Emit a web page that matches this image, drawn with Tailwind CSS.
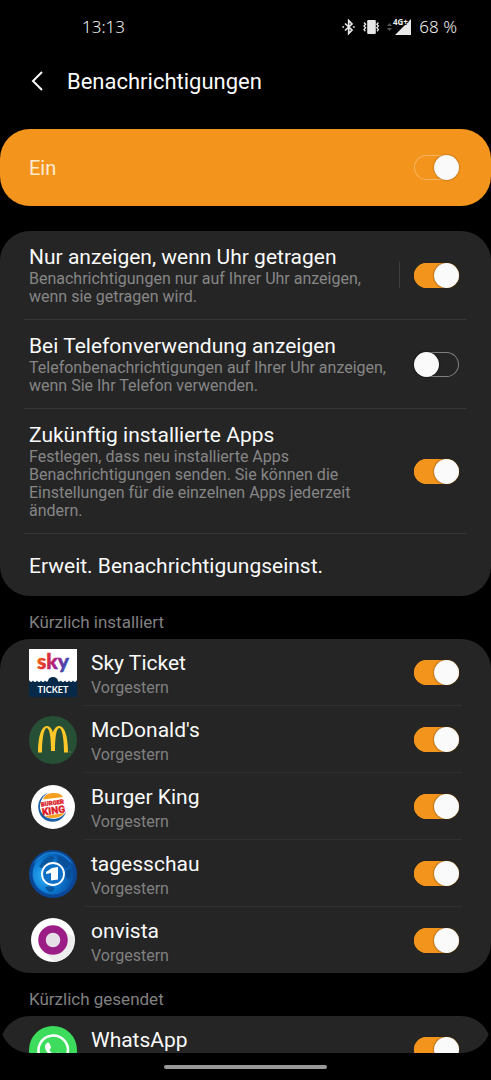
<!DOCTYPE html>
<html lang="de">
<head>
  <meta charset="UTF-8" />
  <meta name="viewport" content="width=device-width, initial-scale=1.0"/>
  <title>Benachrichtigungen</title>
  <script src="https://cdn.jsdelivr.net/npm/@tailwindcss/browser@4"></script>
</head>
<body class="flex h-screen flex-col overflow-hidden bg-black font-[Roboto,sans-serif] text-[#fafafa]">

  <!-- Statusleiste -->
  <div class="flex h-[54px] shrink-0 items-center justify-between pr-[34px] pl-[82px] font-['Noto_Sans',sans-serif] text-[17px] font-light text-[#f0f0f0]">
    <span>13:13</span>
    <div class="flex items-center">
      <svg class="mr-2 h-4 w-[13px]" viewBox="0 0 13 16" fill="none" stroke="#e8e8e8" stroke-width="1.7">
        <path d="M3 4.5 10 11 6.7 14.5V1.5L10 5 3 11.5"/>
        <path d="M.3 8h1.8M10.9 8h1.8"/>
      </svg>
      <svg class="mr-[7px] h-4 w-[17px]" viewBox="0 0 17 16">
        <rect x="4.2" y="1" width="8.6" height="14" rx="1" fill="#e8e8e8"/>
        <path d="M1 3.5 2.6 5.2 1 7l1.6 1.8L1 10.6l1.4 1.6M15.4 3.5l-1.6 1.7L15.4 7l-1.6 1.8 1.6 1.8-1.4 1.6" fill="none" stroke="#e8e8e8" stroke-width="1.3"/>
      </svg>
      <svg class="mr-[2px] h-4 w-[5px]" viewBox="0 0 5 16" fill="#555">
        <path d="M0 7 2.5 4 5 7zM0 9h5L2.5 12z"/>
      </svg>
      <svg class="mr-2 h-[18px] w-[17px] overflow-visible" viewBox="0 0 17 18">
        <path d="M17 1v16H1z" fill="#e8e8e8"/>
        <text x="-1" y="7" font-family="Noto Sans, sans-serif" font-size="8" font-weight="700" fill="#f0f0f0" stroke="#000" stroke-width="1.5" paint-order="stroke">4G+</text>
      </svg>
      <span>68 %</span>
    </div>
  </div>

  <header class="flex h-[54px] shrink-0 items-center pl-[31px]">
    <button type="button" aria-label="Zurück" class="mr-6 flex">
      <svg class="h-5 w-3" viewBox="0 0 12 20" fill="none" stroke="#fafafa" stroke-width="2">
        <path d="M11 1 2 10l9 9"/>
      </svg>
    </button>
    <h1 class="pt-px text-[22px]">Benachrichtigungen</h1>
  </header>

  <main class="mt-[21px] min-h-0 flex-1 overflow-hidden rounded-b-[30px]">
    <label class="flex h-[77px] items-center justify-between rounded-[30px] bg-[#f3951d] pr-8 pl-[29px] text-xl text-[#fdebd0]">
      Ein
      <input type="checkbox" checked class="h-[25px] w-[45px] shrink-0 appearance-none rounded-full bg-[#f3951d] inset-ring inset-ring-[#f7b45f] before:block before:size-[25px] before:rounded-full before:bg-[#fafafa] before:shadow-[0_0_2px_#8a4b00] checked:before:translate-x-5"/>
    </label>

    <section class="mt-[25px] rounded-[30px] bg-[#252525] px-6">
      <div class="flex h-[89px] items-center justify-between border-b border-[#363636] pr-2 pl-[5px]">
        <label for="worn">
          <span class="block text-[21px] leading-[26px]">Nur anzeigen, wenn Uhr getragen</span>
          <span class="block max-w-[350px] text-base leading-[18px] text-[#868686]">Benachrichtigungen nur auf Ihrer Uhr anzeigen, wenn sie getragen wird.</span>
        </label>
        <div class="flex items-center">
          <span class="mr-[14px] h-[26px] w-px bg-[#3e3e3e]"></span>
          <input id="worn" type="checkbox" checked class="h-[25px] w-[45px] shrink-0 appearance-none rounded-full bg-[#252525] inset-ring inset-ring-[#808080] before:block before:size-[25px] before:rounded-full before:bg-[#fafafa] before:shadow-[0_0_2px_#5a3000] checked:bg-[#f3951d] checked:inset-ring-[#f3951d] checked:before:translate-x-5"/>
        </div>
      </div>
      <div class="flex h-[89px] items-center justify-between border-b border-[#363636] pr-2 pl-[5px]">
        <label for="phone">
          <span class="block text-[21px] leading-[26px]">Bei Telefonverwendung anzeigen</span>
          <span class="block max-w-[360px] text-base leading-[18px] text-[#868686]">Telefonbenachrichtigungen auf Ihrer Uhr anzeigen, wenn Sie Ihr Telefon verwenden.</span>
        </label>
        <input id="phone" type="checkbox" class="h-[25px] w-[45px] shrink-0 appearance-none rounded-full bg-[#252525] inset-ring inset-ring-[#808080] before:block before:size-[25px] before:rounded-full before:bg-[#fafafa] before:shadow-[0_0_2px_#000] checked:bg-[#f3951d] checked:inset-ring-[#f3951d] checked:before:translate-x-5"/>
      </div>
      <div class="flex h-[125px] items-center justify-between border-b border-[#363636] pr-2 pl-[5px]">
        <label for="future">
          <span class="block text-[21px] leading-[26px]">Zukünftig installierte Apps</span>
          <span class="block max-w-[330px] text-base leading-[18px] text-[#868686]">Festlegen, dass neu installierte Apps Benachrichtigungen senden. Sie können die Einstellungen für die einzelnen Apps jederzeit ändern.</span>
        </label>
        <input id="future" type="checkbox" checked class="h-[25px] w-[45px] shrink-0 appearance-none rounded-full bg-[#252525] inset-ring inset-ring-[#808080] before:block before:size-[25px] before:rounded-full before:bg-[#fafafa] before:shadow-[0_0_2px_#5a3000] checked:bg-[#f3951d] checked:inset-ring-[#f3951d] checked:before:translate-x-5"/>
      </div>
      <button type="button" class="block h-[62px] w-full pt-[3px] pl-[5px] text-left text-[21px]">Erweit. Benachrichtigungseinst.</button>
    </section>

    <h2 class="flex h-[43px] items-center pt-[10px] pl-[29px] text-[17px] text-[#808080]">Kürzlich installiert</h2>

    <ul class="rounded-[30px] bg-[#252525] px-[29px]">
      <li class="flex h-[67px] items-center">
        <svg class="mr-2 size-12 shrink-0" viewBox="0 0 48 48">
          <defs>
            <linearGradient id="sky" x1="0" x2="1" y1="0" y2=".3">
              <stop offset="0" stop-color="#f39200"/>
              <stop offset=".35" stop-color="#e5342b"/>
              <stop offset=".7" stop-color="#a3218e"/>
              <stop offset="1" stop-color="#3a4bb0"/>
            </linearGradient>
          </defs>
          <path d="M0 0h48v48H0z" fill="#fff"/>
          <text x="8" y="20" font-family="Lato, sans-serif" font-size="21" font-weight="900" fill="url(#sky)" stroke="url(#sky)" stroke-width=".5">sky</text>
          <path d="M0 48V31q2 3.500 4 .5 2 3 4 0 2 3 4 0 2 3 4 0 1.500 2 3 .5c.500-5.500 9.500-5.500 10 0q1.500 1.500 3-.5 2 3 4 0 2 3 4 0 2 3 4 0 2 3 4-.5v17z" fill="#06294a"/>
          <text x="24" y="44" text-anchor="middle" font-family="Lato, sans-serif" font-size="9" font-weight="700" fill="#fff">TICKET</text>
        </svg>
        <div class="flex h-full flex-1 items-center justify-between border-b border-[#303030] pl-[6px]">
          <label for="app-sky" class="pt-[3px]">
            <span class="block text-[21px] leading-7">Sky Ticket</span>
            <span class="block text-base leading-[22px] text-[#808080]">Vorgestern</span>
          </label>
          <input id="app-sky" type="checkbox" checked class="mr-[3px] h-[25px] w-[45px] shrink-0 appearance-none rounded-full bg-[#252525] inset-ring inset-ring-[#808080] before:block before:size-[25px] before:rounded-full before:bg-[#fafafa] before:shadow-[0_0_2px_#5a3000] checked:bg-[#f3951d] checked:inset-ring-[#f3951d] checked:before:translate-x-5"/>
        </div>
      </li>
      <li class="flex h-[67px] items-center">
        <svg class="mr-2 size-12 shrink-0" viewBox="0 0 48 48">
          <circle cx="24" cy="24" r="24" fill="#264f36"/>
          <path d="M9 36.5C9 20 12.500 10 17.800 10c2.700 0 5 2.500 6.200 6.500 1.200-4 3.500-6.500 6.200-6.500C35.500 10 39 20 39 36.500h-4C35 22 33 12 30.200 12 27.500 12 26 21 26 35h-4c0-14-1.500-23-4.200-23C15 12 13 22 13 36.500z" fill="#ffc828"/>
          <circle cx="41" cy="36" r=".7" fill="#8a9a50"/>
        </svg>
        <div class="flex h-full flex-1 items-center justify-between border-b border-[#303030] pl-[6px]">
          <label for="app-mcd" class="pt-[3px]">
            <span class="block text-[21px] leading-7">McDonald's</span>
            <span class="block text-base leading-[22px] text-[#808080]">Vorgestern</span>
          </label>
          <input id="app-mcd" type="checkbox" checked class="mr-[3px] h-[25px] w-[45px] shrink-0 appearance-none rounded-full bg-[#252525] inset-ring inset-ring-[#808080] before:block before:size-[25px] before:rounded-full before:bg-[#fafafa] before:shadow-[0_0_2px_#5a3000] checked:bg-[#f3951d] checked:inset-ring-[#f3951d] checked:before:translate-x-5"/>
        </div>
      </li>
      <li class="flex h-[67px] items-center">
        <svg class="mr-2 size-12 shrink-0" viewBox="0 0 48 48">
          <circle cx="24" cy="24" r="22" fill="#fff"/>
          <path d="M20 9.5C13 11.500 9 17.500 9.200 24.500 9.500 33 16 39 24 38.800c6.500-.3 11.500-4.300 13-10.300-3 5-7.500 7.500-13 7.300C16.500 35.500 11 30.500 11 24c0-6.500 3.500-12 9-14.500z" fill="#1a5fa8"/>
          <path d="M14 16.500C15.500 12 19 10.300 24 10c5-.3 8.500 1 10 4zM16 33 35.500 30c-2 3-6 4.800-10.500 5-4 .2-7-.3-9-2z" fill="#f5a01f"/>
          <g transform="rotate(-8 24 24)" font-family="Roboto, sans-serif" font-weight="900" fill="#dc2027" stroke="#dc2027" stroke-width=".3" text-anchor="middle">
            <text x="24" y="22" font-size="6">BURGER</text>
            <text x="24" y="31" font-size="10">KING</text>
          </g>
        </svg>
        <div class="flex h-full flex-1 items-center justify-between border-b border-[#303030] pl-[6px]">
          <label for="app-bk" class="pt-[3px]">
            <span class="block text-[21px] leading-7">Burger King</span>
            <span class="block text-base leading-[22px] text-[#808080]">Vorgestern</span>
          </label>
          <input id="app-bk" type="checkbox" checked class="mr-[3px] h-[25px] w-[45px] shrink-0 appearance-none rounded-full bg-[#252525] inset-ring inset-ring-[#808080] before:block before:size-[25px] before:rounded-full before:bg-[#fafafa] before:shadow-[0_0_2px_#5a3000] checked:bg-[#f3951d] checked:inset-ring-[#f3951d] checked:before:translate-x-5"/>
        </div>
      </li>
      <li class="flex h-[67px] items-center">
        <svg class="mr-2 size-12 shrink-0" viewBox="0 0 48 48">
          <defs>
            <radialGradient id="globe" cx=".3" cy=".55" r=".7">
              <stop offset="0" stop-color="#2fb0f4"/>
              <stop offset=".5" stop-color="#0f7fd8"/>
              <stop offset="1" stop-color="#0650a4"/>
            </radialGradient>
          </defs>
          <circle cx="24" cy="24" r="24" fill="#0a4796"/>
          <path d="M4 15C8 6 16 2 24 2s16 4 20 13C38 8 31 6 24 6S10 8 4 15z" fill="#1b7fd0"/>
          <circle cx="24" cy="24" r="20.5" fill="url(#globe)"/>
          <path d="M13 12c2-3 6-6 10-6l3 2-3 3 1 3-5 1-3 4-4-1-2-2zM28 6c6 1 10 4 12 9l-3 4-4-3-4 1-3-4 3-3zM37 20l5-1c1 4 0 8-2 11l-4-4zM16 37l5-1 5 2-3 4c-3 0-5-1-7-5z" fill="#07478c" opacity=".7"/>
          <circle cx="24" cy="24" r="11" fill="#0d70c6" stroke="#fff" stroke-width="1.8"/>
          <path d="m17 22 6-4 6-1v12.500l-7 1V23l-5 1z" fill="#fff"/>
        </svg>
        <div class="flex h-full flex-1 items-center justify-between border-b border-[#303030] pl-[6px]">
          <label for="app-ts" class="pt-[3px]">
            <span class="block text-[21px] leading-7">tagesschau</span>
            <span class="block text-base leading-[22px] text-[#808080]">Vorgestern</span>
          </label>
          <input id="app-ts" type="checkbox" checked class="mr-[3px] h-[25px] w-[45px] shrink-0 appearance-none rounded-full bg-[#252525] inset-ring inset-ring-[#808080] before:block before:size-[25px] before:rounded-full before:bg-[#fafafa] before:shadow-[0_0_2px_#5a3000] checked:bg-[#f3951d] checked:inset-ring-[#f3951d] checked:before:translate-x-5"/>
        </div>
      </li>
      <li class="flex h-[66px] items-center">
        <svg class="mr-2 size-12 shrink-0" viewBox="0 0 48 48">
          <circle cx="24" cy="24" r="22" fill="#fff"/>
          <path d="m34 14 11 7a22 22 0 0 1-20 25l-11-12z" fill="#ededed"/>
          <circle cx="24" cy="24" r="11" fill="#e6dfe8" stroke="#9c1d86" stroke-width="7.5"/>
        </svg>
        <div class="flex h-full flex-1 items-center justify-between pl-[6px]">
          <label for="app-onv" class="pt-[3px]">
            <span class="block text-[21px] leading-7">onvista</span>
            <span class="block text-base leading-[22px] text-[#808080]">Vorgestern</span>
          </label>
          <input id="app-onv" type="checkbox" checked class="mr-[3px] h-[25px] w-[45px] shrink-0 appearance-none rounded-full bg-[#252525] inset-ring inset-ring-[#808080] before:block before:size-[25px] before:rounded-full before:bg-[#fafafa] before:shadow-[0_0_2px_#5a3000] checked:bg-[#f3951d] checked:inset-ring-[#f3951d] checked:before:translate-x-5"/>
        </div>
      </li>
    </ul>

    <h2 class="flex h-[43px] items-center pt-[10px] pl-[29px] text-[17px] text-[#808080]">Kürzlich gesendet</h2>

    <ul class="rounded-t-[30px] bg-[#252525] px-[29px]">
      <li class="flex h-[67px] items-center">
        <svg class="mr-2 size-12 shrink-0" viewBox="0 0 48 48">
          <circle cx="24" cy="24" r="24" fill="#3ddc5c"/>
          <path d="m9 39 2.200-8A14.700 14.700 0 1 1 17 37z" fill="none" stroke="#fff" stroke-width="2.5"/>
          <path d="M19 16.500c-1 0-3 1.500-3 4.500 0 5 8 12 12.500 12 3 0 4.500-2 4.500-4 0-.7-4-2.800-4.700-2.500-.8.300-1.500 2-2.300 2.200-1 .2-5.500-3.700-5.500-4.700 0-.7 1.500-1.500 1.500-2.500 0-.7-1.500-4.500-2-4.800z" fill="#fff"/>
        </svg>
        <div class="flex h-full flex-1 items-center justify-between pl-[6px]">
          <label for="app-wa" class="h-full pt-[10px] text-[21px] leading-7">WhatsApp</label>
          <input id="app-wa" type="checkbox" checked class="mr-[3px] h-[25px] w-[45px] shrink-0 appearance-none rounded-full bg-[#252525] inset-ring inset-ring-[#808080] before:block before:size-[25px] before:rounded-full before:bg-[#fafafa] before:shadow-[0_0_2px_#5a3000] checked:bg-[#f3951d] checked:inset-ring-[#f3951d] checked:before:translate-x-5"/>
        </div>
      </li>
    </ul>
  </main>

  <!-- Gestenleiste -->
  <footer class="flex h-[27px] shrink-0 items-center justify-center">
    <div class="h-1 w-1/3 rounded-full bg-[#999]"></div>
  </footer>
</body>
</html>
